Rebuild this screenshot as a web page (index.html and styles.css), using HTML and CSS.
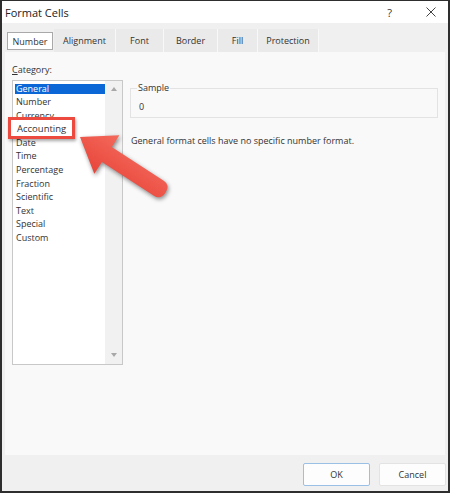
FILE: index.html
```html
<!DOCTYPE html>
<html>
<head>
<meta charset="utf-8">
<link rel="stylesheet" href="styles.css">
</head>
<body>
<div class="window">
  <div class="titlebar">
    <span class="title">Format Cells</span>
    <span class="help">?</span>
    <svg class="close" width="10" height="10" viewBox="0 0 10 10"><path d="M0.5 0.5L9.5 9.5M9.5 0.5L0.5 9.5" stroke="#444" stroke-width="1"/></svg>
  </div>
  <div class="tabstrip">
    <div class="tab selected">Number</div>
    <div class="tabs-rest">
      <div class="tab t-align">Alignment</div>
      <div class="tab t-font">Font</div>
      <div class="tab t-border">Border</div>
      <div class="tab t-fill">Fill</div>
      <div class="tab t-prot">Protection</div>
    </div>
  </div>
  <div class="panel">
    <div class="left">
      <div class="cat-label"><u>C</u>ategory:</div>
      <div class="listbox">
        <div class="items">
          <div class="item sel">General</div>
          <div class="item">Number</div>
          <div class="item">Currency</div>
          <div class="item">Accounting</div>
          <div class="item">Date</div>
          <div class="item">Time</div>
          <div class="item">Percentage</div>
          <div class="item">Fraction</div>
          <div class="item">Scientific</div>
          <div class="item">Text</div>
          <div class="item">Special</div>
          <div class="item">Custom</div>
        </div>
        <div class="scrollbar">
          <span class="tri up"></span>
          <span class="tri down"></span>
        </div>
      </div>
    </div>
    <div class="right">
      <div class="sample">
        <span class="legend">Sample</span>
        <div class="sample-val">0</div>
      </div>
      <div class="desc">General format cells have no specific number format.</div>
    </div>
  </div>
  <div class="footer">
    <button class="btn ok">OK</button>
    <button class="btn">Cancel</button>
  </div>
  <div class="redbox">Accounting</div>
  <svg class="arrow" width="450" height="493" viewBox="0 0 450 493">
    <defs>
      <linearGradient id="ag" x1="0" y1="0" x2="0" y2="1">
        <stop offset="0" stop-color="#f36a5c"/>
        <stop offset="1" stop-color="#e9453a"/>
      </linearGradient>
    </defs>
    <g transform="translate(80 137) rotate(33)">
      <path d="M0 0 L32 -23 L32 -9 L94 -9 Q102 -9 102 0 Q102 9 94 9 L32 9 L32 23 Z" fill="url(#ag)"/>
    </g>
  </svg>
</div>
</body>
</html>
```

FILE: styles.css
```css
* { box-sizing: border-box; }
html, body { margin: 0; padding: 0; background: #fff; }
body { font-family: "Open Sans", "Noto Sans", sans-serif; color: #333; }

.window {
  position: relative;
  width: 450px;
  height: 493px;
  border: 2px solid #2e2e2e;
  border-top-width: 1px;
  display: flex;
  flex-direction: column;
  background: #f0f0f0;
  overflow: hidden;
}

.titlebar {
  height: 22px;
  background: #fff;
  display: flex;
  align-items: center;
  padding-left: 3px;
  font-size: 11px;
  color: #222;
}
.title { flex: 1; }
.help { font-size: 11px; margin-right: 34px; color: #333; }
.close { margin-right: 12px; }

.tabstrip {
  height: 29px;
  display: flex;
  align-items: flex-end;
  padding-left: 5px;
  font-size: 9px;
  background: #f0f0f0;
}
.tab { height: 23px; display: flex; align-items: center; justify-content: center; }
.tab.selected {
  width: 46px;
  height: 18px;
  margin-bottom: 2px;
  background: #fff;
  border: 1px solid #a9a9a9;
  margin-right: 1px;
}
.tabs-rest {
  display: flex;
  background: #eaeaea;
  height: 23px;
}
.tabs-rest .tab { border-right: 1px solid #f8f8f8; }
.t-align { width: 62px; }
.t-font { width: 48px; }
.t-border { width: 54px; }
.t-fill { width: 40px; }
.t-prot { width: 61px; }

.panel {
  flex: 1;
  margin: 0 3px;
  background: #f9f9f9;
  display: flex;
  padding: 9px 0 0 7px;
  font-size: 9px;
}
.left { width: 111px; }
.cat-label { height: 19px; line-height: 18px; }
.cat-label u { text-decoration-thickness: 1px; text-underline-offset: 1px; }

.listbox {
  height: 285px;
  border: 1px solid #c8c8c8;
  background: #fff;
  display: flex;
}
.items { flex: 1; padding: 2px 0 0 2px; }
.item { height: 13.6px; line-height: 13.6px; padding-left: 1px; }
.item.sel {
  height: 10px;
  line-height: 10px;
  margin: 1px 0 1px;
  background: #0b67d6;
  color: #fff;
}
.scrollbar {
  width: 17px;
  background: #f1f1f1;
  display: flex;
  flex-direction: column;
  justify-content: space-between;
  align-items: center;
  padding: 6px 0 7px;
}
.tri { width: 0; height: 0; border-left: 3px solid transparent; border-right: 3px solid transparent; }
.tri.up { border-bottom: 4px solid #a8a8a8; }
.tri.down { border-top: 4px solid #a8a8a8; }

.right { flex: 1; padding: 27px 0 0 7px; }
.sample {
  position: relative;
  width: 308px;
  height: 30px;
  border: 1px solid #e3e3e3;
  padding: 11px 0 0 8px;
}
.legend {
  position: absolute;
  top: -7px;
  left: 6px;
  background: #f9f9f9;
  padding: 0 1px;
  line-height: 12px;
}
.desc { margin-top: 16px; padding-left: 1px; }

.footer {
  height: 36px;
  display: flex;
  justify-content: flex-end;
  align-items: center;
  gap: 9px;
  padding-right: 2px;
}
.btn {
  width: 67px;
  height: 23px;
  background: #fdfdfd;
  border: 1px solid #e3e3e3;
  border-radius: 2px;
  font-family: "Open Sans", "Noto Sans", sans-serif;
  font-size: 9px;
  color: #333;
  padding: 0;
  margin-top: 2px;
}
.btn.ok { border-color: #9bc0e6; }

.redbox {
  position: absolute;
  left: 6px;
  top: 116px;
  width: 67px;
  height: 22px;
  border: 3px solid #ec4a3f;
  background: #fff;
  box-shadow: 1px 2px 3px rgba(0,0,0,0.35);
  font-size: 9.5px;
  line-height: 16px;
  padding: 1px 0 0 6px;
  color: #333;
}
.arrow {
  position: absolute;
  left: -2px;
  top: -1px;
  filter: drop-shadow(1px 2px 2px rgba(0,0,0,0.45));
  pointer-events: none;
}
```
